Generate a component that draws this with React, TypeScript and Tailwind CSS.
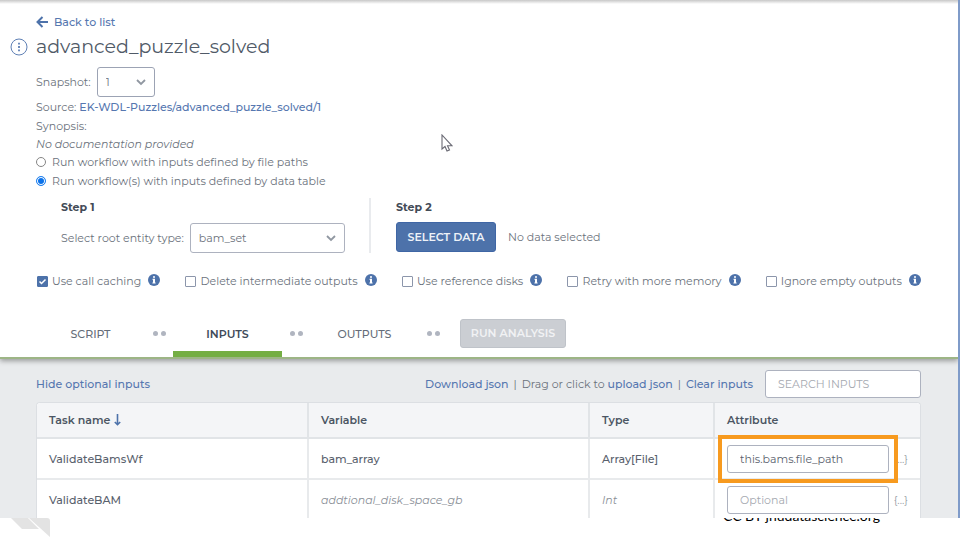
import type { ReactNode } from "react";

function Chevron() {
  return (
    <svg className="pointer-events-none absolute right-2 top-1/2 size-3 -translate-y-1/2" viewBox="0 0 12 12" fill="none" stroke="#9097a1" strokeWidth="1.8">
      <path d="M2 4l4 4 4-4" />
    </svg>
  );
}

function InfoIcon() {
  return (
    <svg className="mb-[2px] size-3 shrink-0" viewBox="0 0 12 12" role="img" aria-label="More information">
      <circle cx="6" cy="6" r="6" fill="#4d72aa" />
      <path d="M5 2.2h2v1.6H5zM4.6 4.8H7v3.6h.6v1.1H4.4V8.4H5V5.9h-.4z" fill="#fff" />
    </svg>
  );
}

function Option({ id, label, checked = false }: { id: string; label: string; checked?: boolean }) {
  return (
    <div className="flex items-center">
      <span className="relative mr-1 flex size-[11px]">
        <input
          id={id}
          type="checkbox"
          defaultChecked={checked}
          className="peer size-[11px] appearance-none rounded-[1px] border border-[#8c96ab] bg-white checked:border-[#4d72aa] checked:bg-[#4d72aa]"
        />
        <svg className="pointer-events-none absolute inset-0 hidden size-[11px] peer-checked:block" viewBox="0 0 11 11" fill="none" stroke="#fff" strokeWidth="1.5">
          <path d="M2.5 5.5l2 2 4-4" />
        </svg>
      </span>
      <label htmlFor={id} className="mr-[7px]">{label}</label>
      <InfoIcon />
    </div>
  );
}

function Tab({ children, active = false }: { children: ReactNode; active?: boolean }) {
  return (
    <button
      className={
        active
          ? "h-12 w-[109px] border-b-[6px] border-[#74ae43] pt-2 font-semibold text-[#404a59]"
          : "h-12 w-[109px] border-b-[6px] border-transparent pt-2 font-medium text-[#646c78]"
      }
    >
      {children}
    </button>
  );
}

function Dots() {
  return (
    <span className="flex w-7 justify-center gap-[3px]">
      <i className="size-[5px] rounded-full bg-[#b0b5c0]" />
      <i className="size-[5px] rounded-full bg-[#b0b5c0]" />
    </span>
  );
}

const link = "font-medium text-[#5677b0]";
const th = "border-b-2 border-[#e1e4e7] px-3 text-left font-semibold text-[#4b5563]";
const td = "border-b-2 border-[#e8eaec] px-3";
const divider = "border-r-2";
const field = "h-7 w-full min-w-0 rounded-[3px] border border-[#adb2bf] bg-white px-3 placeholder:text-[#a5a9b0]";

export default function App() {
  return (
    <div className="flex h-screen flex-col overflow-hidden bg-white font-['Montserrat','Inter',sans-serif] text-[11px] leading-4 text-[#6b727c]">
      <div className="flex min-h-0 flex-1 flex-col overflow-hidden border-r-2 border-[#7f9bc9] bg-[#e9ebed]">
        <header className="relative shrink-0 border-b-2 border-[#9db586] bg-white shadow-[0_2px_5px_rgba(0,0,0,0.35)]">
          <div className="h-1 bg-linear-to-b from-[#c8c8c8] to-white" />
          <div className="px-9 pt-[9px]">
            <a href="#list" className={`flex h-[18px] items-center gap-[6px] ${link}`}>
              <svg className="size-3" viewBox="0 0 12 12" fill="none" stroke="#4d72aa" strokeWidth="2">
                <path d="M6.5 1L1.5 6l5 5M1.5 6H12" />
              </svg>
              Back to list
            </a>
          </div>
          <div className="flex h-8 items-center gap-2 pl-[10px]">
            <svg className="size-[18px]" viewBox="0 0 18 18" fill="none" stroke="#5f80b5" role="img" aria-label="Workflow menu">
              <circle cx="9" cy="9" r="8" />
              <path d="M9 4.7v1.8M9 8.1v1.8M9 11.5v1.8" strokeWidth="1.8" />
            </svg>
            <h1 className="text-[19px] leading-7 text-[#505a67]">advanced_puzzle_solved</h1>
          </div>
          <div className="pl-9 pr-[37px] pt-1">
            <div className="flex items-center gap-[6px]">
              <label htmlFor="snapshot">Snapshot:</label>
              <span className="relative">
                <select id="snapshot" className="block h-[30px] w-[58px] appearance-none rounded-[3px] border border-[#9ca3b4] bg-white px-2">
                  <option>1</option>
                </select>
                <Chevron />
              </span>
            </div>
            <p className="h-[19px] leading-5">
              Source: <a href="#source" className={link}>EK-WDL-Puzzles/advanced_puzzle_solved/1</a>
            </p>
            <p className="h-[18px] leading-5">Synopsis:</p>
            <p className="h-[18px] italic leading-5">No documentation provided</p>
            <div className="flex h-[19px] items-center gap-[6px]">
              <input id="paths" type="radio" name="mode" className="size-[10px] appearance-none rounded-full border border-[#858585]" />
              <label htmlFor="paths">Run workflow with inputs defined by file paths</label>
            </div>
            <div className="flex h-[19px] items-center gap-[6px]">
              <input id="table" type="radio" name="mode" defaultChecked className="size-[10px] appearance-none rounded-full border border-[#2383f0] bg-[#0b72ea] shadow-[inset_0_0_0_1px_white]" />
              <label htmlFor="table">Run workflow(s) with inputs defined by data table</label>
            </div>
            <div className="flex pt-2">
              <section className="flex h-[55px] w-[335px] flex-col justify-between border-r-2 border-[#e9ebee] pl-[25px]">
                <h2 className="pt-[1px] font-bold text-[#434b57]">Step 1</h2>
                <div className="flex items-center gap-[6px]">
                  <label htmlFor="entity" className="whitespace-nowrap">Select root entity type:</label>
                  <span className="relative mr-6 flex-1">
                    <select id="entity" className="block h-[30px] w-full appearance-none rounded-[3px] border border-[#adb2bf] bg-white px-2">
                      <option>bam_set</option>
                    </select>
                    <Chevron />
                  </span>
                </div>
              </section>
              <section className="flex h-[55px] flex-col justify-between pl-[25px]">
                <h2 className="pt-[1px] font-bold text-[#434b57]">Step 2</h2>
                <div className="flex items-center gap-3 pb-px">
                  <button className="h-[30px] w-[100px] rounded-[3px] border border-[#3f66a5] bg-[#4d72aa] font-semibold text-[#eef2f8]">SELECT DATA</button>
                  <span>No data selected</span>
                </div>
              </section>
            </div>
            <div className="flex h-14 items-center justify-between pl-px">
              <Option id="cache" label="Use call caching" checked />
              <Option id="delete" label="Delete intermediate outputs" />
              <Option id="disks" label="Use reference disks" />
              <Option id="memory" label="Retry with more memory" />
              <Option id="empty" label="Ignore empty outputs" />
            </div>
            <nav className="flex items-center">
              <Tab>SCRIPT</Tab>
              <Dots />
              <Tab active>INPUTS</Tab>
              <Dots />
              <Tab>OUTPUTS</Tab>
              <Dots />
              <button disabled className="ml-[13px] h-[29px] w-[106px] rounded-[3px] border border-[#bfc3c9] bg-[#cbced3] font-semibold text-[#f1f2f4]">RUN ANALYSIS</button>
            </nav>
          </div>
        </header>

        <main className="pl-9 pr-[37px] pt-[11px]">
          <div className="flex items-center pb-1">
            <a href="#optional" className={link}>Hide optional inputs</a>
            <div className="ml-auto flex gap-[5px] pr-3">
              <a href="#download" className={link}>Download json</a>
              <span>|</span>
              <span>Drag or click to <a href="#upload" className={link}>upload json</a></span>
              <span>|</span>
              <a href="#clear" className={link}>Clear inputs</a>
            </div>
            <div className="w-[156px]">
              <input aria-label="Search inputs" placeholder="SEARCH INPUTS" className={field} />
            </div>
          </div>
          <div className="rounded-t-[4px] border-x border-t border-[#dcdfe3] bg-white">
            <table className="w-full table-fixed border-separate border-spacing-0">
              <colgroup>
                <col className="w-[272px]" />
                <col className="w-[281px]" />
                <col className="w-[125px]" />
                <col />
              </colgroup>
              <thead className="bg-[#f4f5f7]">
                <tr className="h-9">
                  <th className={`${th} ${divider} rounded-tl-[4px]`}>
                    <span className="flex items-center gap-1">
                      Task name
                      <svg className="h-3 w-[7px]" viewBox="0 0 7 12" fill="none" stroke="#4d72aa" strokeWidth="1.6">
                        <path d="M3.5 0v10M.8 8l2.7 2.7L6.2 8" />
                      </svg>
                    </span>
                  </th>
                  <th className={`${th} ${divider}`}>Variable</th>
                  <th className={`${th} ${divider}`}>Type</th>
                  <th className={`${th} rounded-tr-[4px]`}>Attribute</th>
                </tr>
              </thead>
              <tbody className="text-[#59616d]">
                <tr className="h-[41px]">
                  <td className={`${td} ${divider} font-medium`}>ValidateBamsWf</td>
                  <td className={`${td} ${divider} font-medium`}>bam_array</td>
                  <td className={`${td} ${divider} font-medium`}>Array[File]</td>
                  <td className={td}>
                    <div className="flex items-center gap-[5px]">
                      <div className="relative flex-1">
                        <input aria-label="bam_array attribute" defaultValue="this.bams.file_path" className={field} />
                        <span className="pointer-events-none absolute -inset-x-[9px] -inset-y-[10px] border-4 border-[#f79a1f]" />
                      </div>
                      <button className="text-[#9a9fa8]">{"{...}"}</button>
                    </div>
                  </td>
                </tr>
                <tr className="h-[41px]">
                  <td className={`${td} ${divider} font-medium`}>ValidateBAM</td>
                  <td className={`${td} ${divider} italic text-[#8a8f97]`}>addtional_disk_space_gb</td>
                  <td className={`${td} ${divider} italic text-[#8a8f97]`}>Int</td>
                  <td className={td}>
                    <div className="flex items-center gap-[5px]">
                      <div className="flex-1">
                        <input aria-label="addtional_disk_space_gb attribute" placeholder="Optional" className={field} />
                      </div>
                      <button className="text-[#9a9fa8]">{"{...}"}</button>
                    </div>
                  </td>
                </tr>
              </tbody>
            </table>
          </div>
        </main>
      </div>

      <footer className="flex h-[22px] shrink-0 items-start justify-between overflow-hidden pl-[10px] pr-20">
        <svg className="h-5 w-10" viewBox="0 0 40 20" fill="#e3e3e3">
          <path d="M1 0h17l11 11H12zM19 0h18q3 0 3 3v16z" />
        </svg>
        <span className="-mt-3 font-['Lato',sans-serif] text-sm leading-5 text-black">CC BY jhudatascience.org</span>
      </footer>

      <svg className="pointer-events-none absolute left-[441px] top-[134px] h-[18px] w-3" viewBox="0 0 12 18" fill="#fff" stroke="#6b6b75" strokeWidth="1.1">
        <path d="M1 1v14l3-2.5L6 17l2.5-1-2-4.2H11z" />
      </svg>
    </div>
  );
}
